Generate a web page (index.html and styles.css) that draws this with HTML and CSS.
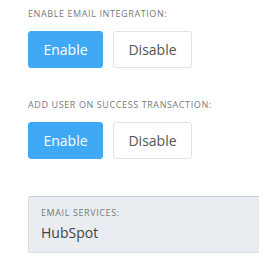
FILE: index.html
```html
<!DOCTYPE html>
<html lang="en">
<head>
    <meta charset="UTF-8">
    <meta name="viewport" content="width=device-width, initial-scale=1.0">
    <title>Email Integration</title>
    <link rel="stylesheet" href="styles.css">
</head>
<body>
    <main class="settings">
        <div class="setting">
            <div class="setting-label">Enable email integration:</div>
            <div class="button-group">
                <button class="btn btn-active">Enable</button>
                <button class="btn">Disable</button>
            </div>
        </div>
        <div class="setting">
            <div class="setting-label">Add user on success transaction:</div>
            <div class="button-group">
                <button class="btn btn-active">Enable</button>
                <button class="btn">Disable</button>
            </div>
        </div>
        <div class="service-box">
            <div class="setting-label">Email services:</div>
            <div class="service-name">HubSpot</div>
        </div>
    </main>
</body>
</html>
```

FILE: styles.css
```css
body {
    font-family: 'Open Sans', 'Lato', sans-serif;
    background-color: #fff;
    margin: 0;
    padding: 0;
    overflow: hidden;
}

.settings {
    padding: 8px 0 0 28px;
}

.setting {
    margin-bottom: 31px;
}

.setting-label {
    font-size: 9px;
    line-height: 12px;
    letter-spacing: 0.6px;
    text-transform: uppercase;
    color: #7a7a7a;
    margin-bottom: 11px;
}

.button-group {
    display: flex;
    gap: 10px;
}

.btn {
    font-family: inherit;
    font-size: 14px;
    height: 37px;
    width: 79px;
    padding: 0;
    border: 1px solid #e3e3e3;
    border-radius: 3px;
    background-color: #fff;
    color: #555;
    cursor: pointer;
}

.btn-active {
    width: 75px;
    background-color: #3fa9f5;
    border-color: #3fa9f5;
    color: #fff;
}

.service-box {
    margin-top: 37px;
    box-sizing: border-box;
    padding: 10px 12px 10px;
    background-color: #e9edf1;
    border: 1px solid #d9dde1;
    border-top-color: #c9ced3;
    border-right: none;
    border-radius: 2px 0 0 2px;
}

.service-box .setting-label {
    margin-bottom: 4px;
}

.service-name {
    font-size: 14px;
    color: #444;
}
```
